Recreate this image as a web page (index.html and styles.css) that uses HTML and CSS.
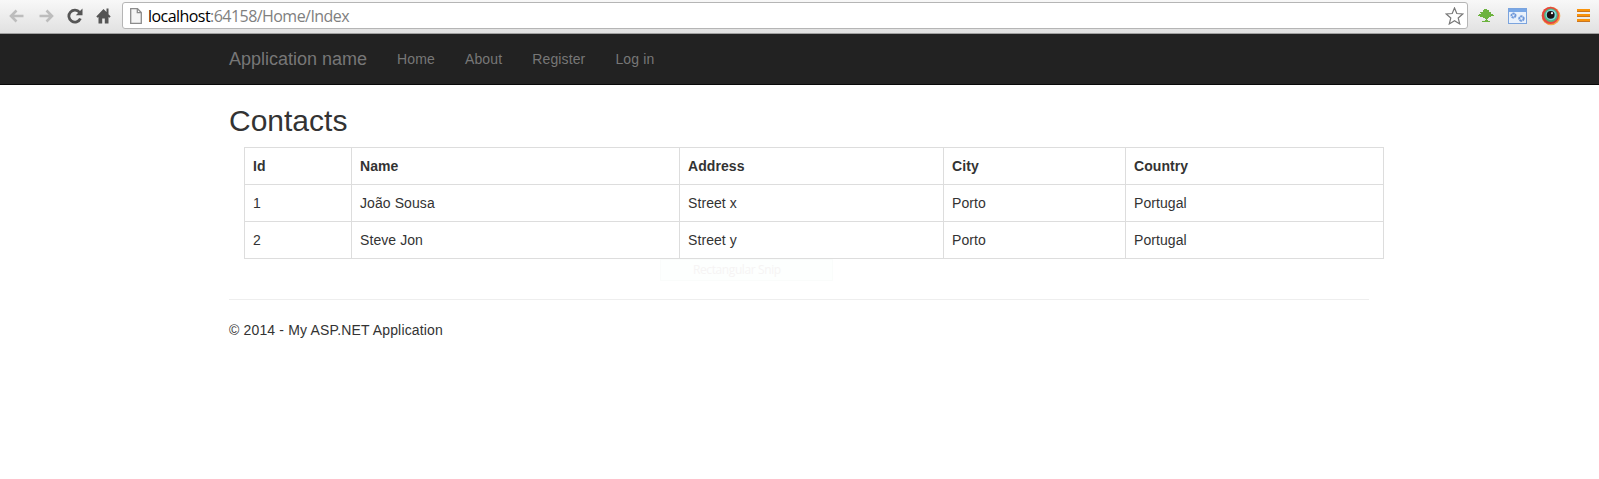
FILE: index.html
```
<!DOCTYPE html>
<html lang="en">
<head>
<meta charset="utf-8">
<title>Contacts</title>
<link rel="stylesheet" href="styles.css">
</head>
<body>
<div class="toolbar">
  <div class="controls">
    <svg class="arrow" width="16" height="14" viewBox="0 0 16 14"><path d="M7.500 1.500 2 7l5.500 5.500M2.500 7H14.500"/></svg>
    <svg class="arrow" width="16" height="14" viewBox="0 0 16 14"><path d="M8.500 1.500 14 7l-5.500 5.500M13.500 7H1.500"/></svg>
    <svg class="reload" width="16" height="16" viewBox="0 0 16 16"><path class="ring" d="M12.600 4.400A6 6 0 1 0 13.400 10.500"/><path class="tip" d="M15.500 .5V7.200H8.800z"/></svg>
    <svg class="home" width="16" height="16" viewBox="0 0 16 16"><path d="M7.500 1 .3 8.400l1.300 1.300.9-.8V15.500h3.700v-5h2.600v5h3.700V8.900l.9.8 1.300-1.300-2.200-2.200V.5h-2v3.500z"/></svg>
  </div>
  <div class="address">
    <svg class="page" width="12" height="16" viewBox="0 0 12 16"><path d="M.7.700H7.500l3.800 3.800v10.800H.7zM7.300.900v3.800h3.800"/></svg>
    <span class="url"><span class="host">localhost</span>:64158/Home/Index</span>
    <svg class="star" width="19" height="18" viewBox="0 0 19 18"><path d="M9.500 1l2.300 5.500 6 .5-4.600 4 1.500 5.900-5.200-3.200-5.200 3.200 1.500-5.900-4.600-4 6-.5z"/></svg>
  </div>
  <div class="extensions">
    <svg width="18" height="16" viewBox="0 0 18 16"><path fill="#6db33f" d="M6 2h1V1h3v1h2v2h2v2h2v1h1v1h-3v1h-2v1h-1v1h-1v1h1v1h2v1H5v-1h3v-1h1v-1H8v-1H6V9H3V8H1V7h1V6h2V5H3V4h3z"/></svg>
    <svg width="20" height="16" viewBox="0 0 20 16"><rect x=".5" y=".5" width="18" height="15" fill="#e9f1fb" stroke="#7ba4de"/><path fill="#78a7e6" d="M1 1h17v3H1z"/><g fill="none" stroke="#6e98da" stroke-width="2"><circle cx="5.500" cy="7.500" r="2" stroke-dasharray="2 .5"/><circle cx="13.500" cy="10.500" r="2.200" stroke-dasharray="2.200 .5"/></g></svg>
    <svg width="20" height="20" viewBox="0 0 20 20"><circle cx="10" cy="10" r="9.300" fill="#f5a54a"/><circle cx="9.400" cy="9.400" r="8.600" fill="#e5483f"/><circle cx="9.900" cy="9.200" r="6.700" fill="#52b783"/><circle cx="10" cy="8.800" r="5.400" fill="#80d8df"/><circle cx="9.700" cy="8.800" r="3.900" fill="#191315"/><circle cx="11" cy="7.200" r="1.100" fill="#fff"/></svg>
    <svg width="14" height="14" viewBox="0 0 14 14"><path fill="#f9930c" d="M0 0h13v3H0zM0 5h13v3H0zM0 10h13v3H0z"/><path fill="#c87522" d="M0 2h13v1H0zM0 7h13v1H0zM0 12h13v1H0z"/></svg>
  </div>
</div>
<nav class="navbar">
  <div class="container nav-row">
    <a class="brand">Application name</a>
    <a class="nav-link">Home</a>
    <a class="nav-link">About</a>
    <a class="nav-link">Register</a>
    <a class="nav-link">Log in</a>
  </div>
</nav>
<main class="container">
  <h2 class="title">Contacts</h2>
  <div class="table-holder">
    <table class="contacts">
      <colgroup><col class="c-id"><col class="c-name"><col class="c-address"><col class="c-city"><col class="c-country"></colgroup>
      <tr><th>Id</th><th>Name</th><th>Address</th><th>City</th><th>Country</th></tr>
      <tr><td>1</td><td>João Sousa</td><td>Street x</td><td>Porto</td><td>Portugal</td></tr>
      <tr><td>2</td><td>Steve Jon</td><td>Street y</td><td>Porto</td><td>Portugal</td></tr>
    </table>
    <div class="snip"><span>Rectangular Snip</span></div>
  </div>
  <hr class="rule">
  <footer>© 2014 - My ASP.NET Application</footer>
</main>
</body>
</html>
```
FILE: styles.css
```
* { box-sizing: border-box; }
body {
  margin: 0;
  background: #fff;
  color: #333;
  font: 14px/20px "Liberation Sans", Arial, sans-serif;
  height: 479px;
  overflow: hidden;
}
svg { display: block; flex: none; }

.toolbar {
  display: flex;
  height: 34px;
  padding-top: 2px;
  background: linear-gradient(#f8f8f8, #e1e1e1);
  border-bottom: 1px solid #a0a0a0;
}
.controls {
  display: flex;
  align-items: center;
  gap: 13px;
  width: 122px;
  height: 27px;
  padding-left: 9px;
}
.arrow { fill: none; stroke: #bdbdbd; stroke-width: 2.6; }
.ring { fill: none; stroke: #555; stroke-width: 2.8; }
.tip, .home { fill: #555; }
.address {
  display: flex;
  align-items: center;
  width: 1346px;
  height: 27px;
  padding: 0 3px 0 7px;
  background: #fff;
  border: 1px solid #b5b5b5;
  border-radius: 3px;
}
.page path { fill: #f5f5f5; stroke: #8c8c8c; stroke-width: 1.3; }
.url {
  flex: 1;
  margin-left: 6px;
  color: #808080;
  font: 16px/24px "Open Sans", "Noto Sans", sans-serif;
  letter-spacing: -.55px;
}
.host { color: #000; }
.star path { fill: #fff; stroke: #777; stroke-width: 1.2; }
.extensions {
  display: flex;
  align-items: center;
  height: 27px;
  padding-left: 9px;
  gap: 13px;
}
.extensions svg:last-child { margin-left: 3px; }

.container { width: 1140px; margin-left: 229px; }
.navbar {
  height: 51px;
  background: #222;
  border-bottom: 1px solid #080808;
}
.nav-row { display: flex; }
.brand, .nav-link { padding: 15px; color: #777; }
.nav-link { letter-spacing: .13px; }
.brand { padding-left: 0; font-size: 18px; }

.title {
  margin: 0;
  padding: 19px 0 10px;
  font-size: 30px;
  font-weight: 500;
  line-height: 33px;
}
.table-holder { position: relative; padding-left: 15px; }
.contacts {
  width: 1140px;
  table-layout: fixed;
  border-collapse: collapse;
}
.c-id { width: 107px; }
.c-name { width: 328px; }
.c-address { width: 264px; }
.c-city { width: 182px; }
.contacts th, .contacts td {
  height: 37px;
  padding: 8px;
  border: 1px solid #ddd;
  text-align: left;
  letter-spacing: .08px;
}
/* Faded tooltip hanging below the table */
.snip {
  position: absolute;
  left: 431px;
  top: 112px;
  width: 173px;
  height: 22px;
  padding-left: 32px;
  background: #fdfffe;
  border: 1px solid #fafcfb;
  color: #f6f4f4;
  font: 12px/20px "Open Sans", "Noto Sans", sans-serif;
  letter-spacing: -.4px;
}
.rule {
  margin: 40px 0 20px;
  border: 0;
  border-top: 1px solid #eee;
}
footer { letter-spacing: .16px; }
```
